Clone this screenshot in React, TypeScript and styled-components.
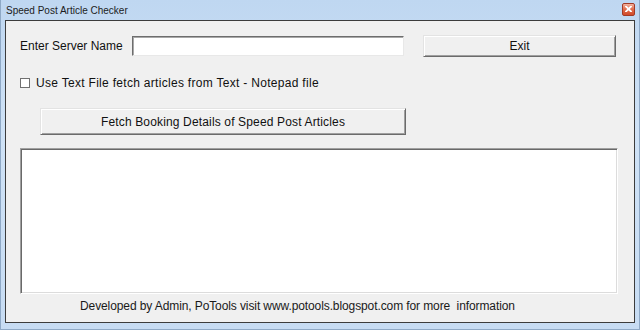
import React, { useState } from "react";
import styled, { createGlobalStyle } from "styled-components";

const GlobalStyle = createGlobalStyle`
  html, body {
    margin: 0;
    padding: 0;
    background: #ffffff;
  }
  #root {
    width: 640px;
    height: 330px;
  }
`;

const uiFont = `"Liberation Sans", Arial, sans-serif`;

const Window = styled.div`
  width: 640px;
  height: 330px;
  box-sizing: border-box;
  display: flex;
  flex-direction: column;
  padding: 0 4px 6px 4px;
  background: linear-gradient(180deg, #bfd7f1 0%, #cfe2f6 40%, #c7dcf3 100%);
  border-left: 1px solid #8fa9c6;
  border-right: 1px solid #8fa9c6;
  border-bottom: 1px solid #8fa9c6;
`;

const TitleBar = styled.div`
  height: 20px;
  display: flex;
  align-items: center;
  justify-content: space-between;
  padding-left: 1px;
`;

const TitleText = styled.span`
  font-family: ${uiFont};
  font-size: 10px;
  color: #1c1c1c;
`;

const CloseButton = styled.button`
  width: 13px;
  height: 13px;
  margin-top: -2px;
  padding: 0;
  display: flex;
  align-items: center;
  justify-content: center;
  border: 1px solid #a23a25;
  border-radius: 2px;
  background: linear-gradient(180deg, #f2b3a0 0%, #e2704f 45%, #d04a2a 100%);
`;

const Client = styled.div`
  flex: 1;
  display: flex;
  flex-direction: column;
  background: #f0f0f0;
  border: 1px solid #3c3c3c;
  padding: 14px 15px 0 14px;
  font-family: ${uiFont};
  font-size: 12px;
  color: #111;
`;

const Row = styled.div`
  display: flex;
  align-items: center;
`;

const Label = styled.label`
  width: 112px;
  white-space: nowrap;
`;

const TextInput = styled.input`
  box-sizing: border-box;
  width: 272px;
  height: 20px;
  margin: 0 19px 0 0;
  padding: 0 3px;
  background: #ffffff;
  border-style: solid;
  border-width: 1px;
  border-color: #6d6d6d #e8e8e8 #e8e8e8 #6d6d6d;
  box-shadow: inset 1px 1px 0 #a8a8a8;
  outline: none;
  font-family: ${uiFont};
  font-size: 12px;
`;

const Button = styled.button<{ $w: number; $h: number; $indent?: number; $tracking?: number }>`
  box-sizing: border-box;
  width: ${(p) => p.$w}px;
  height: ${(p) => p.$h}px;
  margin-left: ${(p) => p.$indent ?? 0}px;
  padding: 0;
  background: #f0f0f0;
  border-style: solid;
  border-width: 1px;
  border-color: #e3e3e3 #6b6b6b #6b6b6b #e3e3e3;
  box-shadow: inset 1px 1px 0 #ffffff, inset -1px -1px 0 #a0a0a0;
  font-family: ${uiFont};
  font-size: 12px;
  letter-spacing: ${(p) => p.$tracking ?? 0}px;
  color: #111;
`;

const CheckRow = styled(Row)`
  margin-top: 19px;
  gap: 6px;
`;

const CheckBox = styled.span<{ $checked: boolean }>`
  box-sizing: border-box;
  width: 10px;
  height: 10px;
  background: #ffffff;
  border: 1px solid #707070;
  display: flex;
  align-items: center;
  justify-content: center;
  font-size: 8px;
  line-height: 1;
  color: #222;
`;

const CheckLabel = styled.span`
  letter-spacing: 0.3px;
`;

const FetchRow = styled(Row)`
  margin-top: 18px;
`;

const OutputBox = styled.div`
  box-sizing: border-box;
  margin-top: 13px;
  width: 598px;
  height: 146px;
  background: #ffffff;
  border-style: solid;
  border-width: 1px;
  border-color: #a0a0a0 #ffffff #ffffff #a0a0a0;
  box-shadow: inset 1px 1px 0 #696969, inset -1px -1px 0 #dcdcdc;
`;

const Footer = styled.div`
  margin-top: 5px;
  padding-left: 60px;
  white-space: pre;
  letter-spacing: -0.1px;
  color: #1a1a1a;
`;

const App = () => {
  const [useFile, setUseFile] = useState(false);

  return (
    <>
      <GlobalStyle />
      <Window>
        <TitleBar>
          <TitleText>Speed Post Article Checker</TitleText>
          <CloseButton aria-label="Close">
            <svg width="7" height="6" viewBox="0 0 7 6">
              <path
                d="M1 0.5 L6 5.5 M6 0.5 L1 5.5"
                stroke="#ffffff"
                strokeWidth="1.8"
                strokeLinecap="square"
              />
            </svg>
          </CloseButton>
        </TitleBar>
        <Client>
          <Row>
            <Label>Enter Server Name</Label>
            <TextInput />
            <Button $w={193} $h={22}>
              Exit
            </Button>
          </Row>
          <CheckRow onClick={() => setUseFile(!useFile)}>
            <CheckBox $checked={useFile}>{useFile ? "✓" : ""}</CheckBox>
            <CheckLabel>Use Text File fetch articles from Text - Notepad file</CheckLabel>
          </CheckRow>
          <FetchRow>
            <Button $w={366} $h={27} $indent={20} $tracking={0.15}>
              Fetch Booking Details of Speed Post Articles
            </Button>
          </FetchRow>
          <OutputBox />
          <Footer>
            Developed by Admin, PoTools visit www.potools.blogspot.com for more  information
          </Footer>
        </Client>
      </Window>
    </>
  );
};

export default App;
